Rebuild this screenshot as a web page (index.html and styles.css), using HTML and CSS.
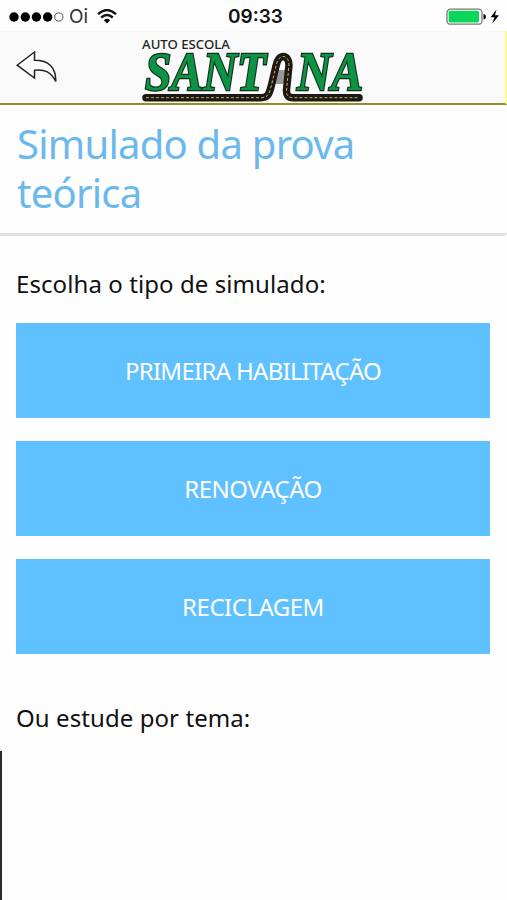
FILE: index.html
```html
<!DOCTYPE html>
<html lang="pt-BR">
<head>
    <meta charset="UTF-8">
    <meta name="viewport" content="width=device-width, initial-scale=1.0">
    <title>Simulado da prova teórica</title>
    <link rel="stylesheet" href="styles.css">
</head>
<body>

    <div class="status-bar">
        <div class="status-left">
            <svg class="signal" width="56" height="12" viewBox="0 0 56 12">
                <circle cx="5" cy="6" r="4.7"/>
                <circle cx="16.3" cy="6" r="4.7"/>
                <circle cx="27.4" cy="6" r="4.7"/>
                <circle cx="38.6" cy="6" r="4.7"/>
                <circle class="empty" cx="49.8" cy="6" r="4.1"/>
            </svg>
            <span class="carrier">Oi</span>
            <svg class="wifi" width="20" height="15" viewBox="0 0 20 15">
                <path d="M1 5.2 Q10 -3 19 5.2"/>
                <path d="M4.2 8.5 Q10 3.3 15.8 8.5"/>
                <path class="dot" d="M6.8 11.2 Q10 8.4 13.2 11.2 L10 14.6 Z"/>
            </svg>
        </div>
        <span class="clock">09:33</span>
        <div class="status-right">
            <svg width="54" height="18" viewBox="0 0 54 18">
                <rect class="battery-case" x="1" y="1.2" width="35" height="15" rx="3.5"/>
                <rect class="battery-fill" x="2.6" y="2.8" width="30.4" height="11.8" rx="1.5"/>
                <path d="M37.5 6 Q40 6.2 40 8.7 T37.5 11.4 Z"/>
                <path d="M50.5 1.4 L44.6 9.2 H48.4 L46.2 15.8 L53 7.3 H49 Z"/>
            </svg>
        </div>
    </div>

    <div class="header">
        <svg class="back" width="42" height="34" viewBox="0 0 42 34">
            <path d="M18.5 2 L1.2 15.2 L18.5 28 V20.2 C29 19 35 22 39.8 31.5 C40 17 32.5 10.2 18.5 10.2 Z"/>
        </svg>
        <svg class="logo" width="240" height="68" viewBox="0 0 240 68">
            <text class="logo-small" x="1" y="13.3" textLength="88" lengthAdjust="spacingAndGlyphs">AUTO ESCOLA</text>
            <path class="logo-bar" d="M136 34 H147 V48 H134 Z"/>
            <text class="logo-big" x="4" y="54" textLength="121" lengthAdjust="spacingAndGlyphs">SANT</text>
            <text class="logo-big" x="156" y="54" textLength="66" lengthAdjust="spacingAndGlyphs">NA</text>
            <path class="road" d="M5 61.7 H120 C127 61.7 128 58 130 51 L135 30 C137 17 148 18 148 29 L145.5 54 Q145 61.7 152 61.7 H218"/>
            <path class="road-line" d="M5 61.7 H120 C127 61.7 128 58 130 51 L135 30 C137 17 148 18 148 29 L145.5 54 Q145 61.7 152 61.7 H218"/>
        </svg>
    </div>

    <h1 class="title">Simulado da prova teórica</h1>

    <div class="content">
        <p class="label">Escolha o tipo de simulado:</p>
        <button class="option primeira">PRIMEIRA HABILITAÇÃO</button>
        <button class="option">RENOVAÇÃO</button>
        <button class="option">RECICLAGEM</button>
        <p class="label tema">Ou estude por tema:</p>
    </div>
    <div class="temas"></div>

</body>
</html>
```

FILE: styles.css
```css
* {
    box-sizing: border-box;
}

body {
    display: flex;
    flex-direction: column;
    height: 100vh;
    margin: 0;
    overflow: hidden;
    font-family: "Trebuchet MS", "Noto Sans", sans-serif;
    background-color: #fefefe;
    color: #111;
}

.status-bar {
    display: grid;
    grid-template-columns: 1fr auto 1fr;
    align-items: center;
    height: 31px;
    padding: 2px 7px 0 9px;
    font-family: Inter, sans-serif;
}

.status-left {
    display: flex;
    align-items: center;
}

.signal .empty {
    fill: none;
    stroke: #555;
    stroke-width: 1;
}

.carrier {
    width: 19px;
    margin: 0 9px 0 4px;
    font-size: 19px;
    color: #333;
}

.wifi path {
    fill: none;
    stroke: #111;
    stroke-width: 2.4;
}

.wifi .dot {
    fill: #111;
    stroke: none;
}

.clock {
    padding-left: 2px;
    font-size: 19px;
    font-weight: 600;
}

.status-right {
    display: flex;
    justify-content: flex-end;
}

.battery-case {
    fill: #fff;
    stroke: #777;
    stroke-width: 1.3;
}

.battery-fill {
    fill: #08d75b;
}

.header {
    display: flex;
    align-items: flex-start;
    height: 74px;
    padding-left: 16px;
    background-color: #f9f9f9;
    border-right: 2px solid #fbfb8a;
    border-bottom: 2px solid #8f8f24;
}

.back {
    margin-top: 19px;
    fill: #fff;
    stroke: #222;
    stroke-width: 1.5;
}

.logo {
    margin: 5px 0 0 83px;
}

.logo-small {
    font: 500 12.5px "Noto Sans", sans-serif;
    fill: #222;
}

.logo-big {
    font: italic bold 54px "Liberation Serif", serif;
    fill: #0b9444;
    stroke: #15301f;
    stroke-width: 2.6;
    paint-order: stroke;
}

.logo-bar {
    fill: #999;
}

.road {
    fill: none;
    stroke: #1c1915;
    stroke-width: 7.5;
    stroke-linecap: round;
}

.road-line {
    fill: none;
    stroke: #c9b45a;
    stroke-width: 1;
    stroke-dasharray: 3 2;
}

.title {
    height: 131px;
    margin: 0;
    padding: 14px 100px 0 17px;
    font-size: 40px;
    font-weight: normal;
    line-height: 49px;
    letter-spacing: -0.75px;
    color: #6bb9ec;
    border-bottom: 3px solid #dfdfdf;
    border-bottom-right-radius: 4px;
}

.content {
    display: flex;
    flex-direction: column;
    padding: 31px 17px 0 16px;
}

.label {
    margin: 0 0 23px;
    font-size: 24px;
    line-height: 33px;
    letter-spacing: 0.08px;
}

.option {
    height: 94.5px;
    margin-bottom: 23.7px;
    font-family: inherit;
    font-size: 24px;
    letter-spacing: -0.5px;
    color: #fff;
    background-color: #5fc1ff;
    border: none;
}

.primeira {
    letter-spacing: -0.7px;
}

.tema {
    margin: 23px 0 17px;
}

.temas {
    flex: 1;
    border-left: 2px solid #2a2a2a;
}
```
